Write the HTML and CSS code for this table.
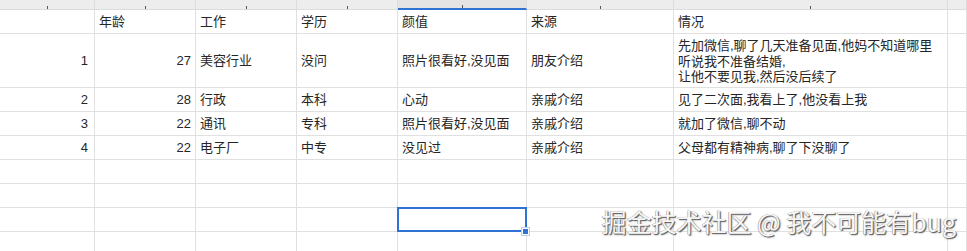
FILE: index.html
```html
<!DOCTYPE html>
<html lang="zh">
<head>
<meta charset="utf-8">
<link rel="stylesheet" href="styles.css">
</head>
<body>
<div class="sheet">
  <div class="colhead">
    <div class="ch w0"><span class="tick"></span></div>
    <div class="ch w1"><span class="tick"></span></div>
    <div class="ch w2"><span class="tick"></span></div>
    <div class="ch w3"><span class="tick"></span></div>
    <div class="ch w4 sel"><span class="tick"></span></div>
    <div class="ch w5"><span class="tick"></span></div>
    <div class="ch w6"><span class="tick"></span></div>
    <div class="ch w7"></div>
  </div>
  <div class="grid">
    <div class="c"></div><div class="c">年龄</div><div class="c">工作</div><div class="c">学历</div><div class="c">颜值</div><div class="c">来源</div><div class="c">情况</div><div class="c"></div>

    <div class="c tall num n0">1</div><div class="c tall num">27</div><div class="c tall">美容行业</div><div class="c tall">没问</div><div class="c tall">照片很看好,没见面</div><div class="c tall">朋友介绍</div><div class="c tall multi">先加微信,聊了几天准备见面,他妈不知道哪里<br>听说我不准备结婚,<br>让他不要见我,然后没后续了</div><div class="c tall"></div>

    <div class="c num n0">2</div><div class="c num">28</div><div class="c">行政</div><div class="c">本科</div><div class="c">心动</div><div class="c">亲戚介绍</div><div class="c">见了二次面,我看上了,他没看上我</div><div class="c"></div>

    <div class="c num n0">3</div><div class="c num">22</div><div class="c">通讯</div><div class="c">专科</div><div class="c">照片很看好,没见面</div><div class="c">亲戚介绍</div><div class="c">就加了微信,聊不动</div><div class="c"></div>

    <div class="c num n0">4</div><div class="c num">22</div><div class="c">电子厂</div><div class="c">中专</div><div class="c">没见过</div><div class="c">亲戚介绍</div><div class="c">父母都有精神病,聊了下没聊了</div><div class="c"></div>

    <div class="c"></div><div class="c"></div><div class="c"></div><div class="c"></div><div class="c"></div><div class="c"></div><div class="c"></div><div class="c"></div>
    <div class="c"></div><div class="c"></div><div class="c"></div><div class="c"></div><div class="c"></div><div class="c"></div><div class="c"></div><div class="c"></div>
    <div class="c"></div><div class="c"></div><div class="c"></div><div class="c"></div><div class="c active"><span class="handle"></span></div><div class="c"></div><div class="c"></div><div class="c"></div>
    <div class="c"></div><div class="c"></div><div class="c"></div><div class="c"></div><div class="c"></div><div class="c"></div><div class="c"></div><div class="c"></div>
  </div>
  <div class="watermark">掘金技术社区 @ 我不可能有bug</div>
</div>
</body>
</html>
```

FILE: styles.css
```css
html, body {
  margin: 0;
  padding: 0;
  background: #ffffff;
  overflow: hidden;
}
.sheet {
  position: relative;
  width: 967px;
  height: 251px;
  overflow: hidden;
  font-family: "Liberation Sans", "Noto Sans CJK SC", sans-serif;
  font-size: 13px;
  color: #262626;
}
.colhead {
  display: flex;
  height: 10px;
  background: #ededed;
}
.ch {
  box-sizing: border-box;
  height: 10px;
  border-right: 1px solid #dcdcdc;
  border-bottom: 1px solid #dcdcdc;
  display: flex;
  justify-content: center;
  align-items: flex-end;
  position: relative;
}
.ch.sel {
  background: #e4e4e4;
  border-bottom: 2px solid #2f72d6;
}
.tick {
  width: 1px;
  height: 3px;
  background: #555;
  margin-bottom: 0;
}
.ch.sel .tick { margin-bottom: 0; }
.w0 { width: 95px; }
.w1 { width: 101px; }
.w2 { width: 101px; }
.w3 { width: 101px; }
.w4 { width: 129px; }
.w5 { width: 147px; }
.w6 { width: 274px; }
.w7 { width: 19px; }
.grid {
  display: grid;
  grid-template-columns: 95px 101px 101px 101px 129px 147px 274px 19px;
  grid-template-rows: 24px 54px repeat(7, 24px);
}
.c {
  box-sizing: border-box;
  border-right: 1px solid #e0e0e0;
  border-bottom: 1px solid #e0e0e0;
  padding: 0 4px;
  display: flex;
  align-items: center;
  white-space: nowrap;
  overflow: hidden;
  line-height: 15.5px;
}
.num {
  justify-content: flex-end;
}
.n0 {
  padding-right: 6px;
}
.multi {
  display: block;
  padding-top: 4px;
  line-height: 15.5px;
}
.active {
  position: relative;
  overflow: visible;
}
.active::before {
  content: "";
  position: absolute;
  left: -1px;
  top: -1px;
  right: -1px;
  bottom: -1px;
  border: 2px solid #2f72d6;
}
.handle {
  position: absolute;
  right: -3px;
  bottom: -4px;
  width: 5px;
  height: 5px;
  background: #2f72d6;
  border: 1px solid #ffffff;
  outline: 1px solid #b9cdf0;
  z-index: 2;
}
.watermark {
  position: absolute;
  right: 11px;
  top: 205px;
  font-family: "Noto Sans CJK SC", sans-serif;
  font-size: 25px;
  line-height: 32px;
  color: #f7f7f7;
  text-shadow: 1px 1px 0 #6b6b6b, 1px 1px 2px #777777, -0.5px -0.5px 0 #9a9a9a;
  white-space: nowrap;
}
```
